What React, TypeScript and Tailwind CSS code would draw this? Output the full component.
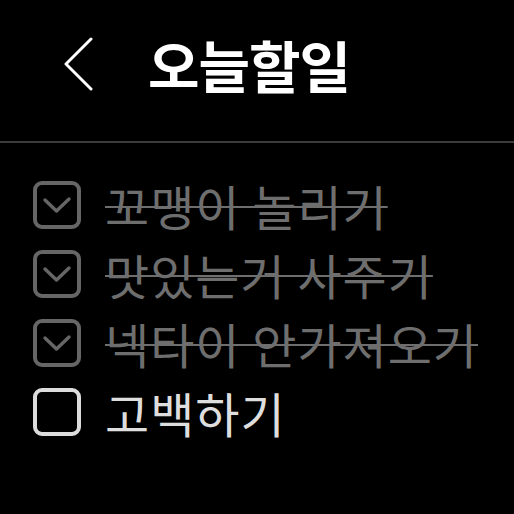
const todos = [
  { text: '꼬맹이 놀리기', done: true },
  { text: '맛있는거 사주기', done: true },
  { text: '넥타이 안가져오기', done: true },
  { text: '고백하기', done: false },
]

function CheckBox({ done }: { done: boolean }) {
  return (
    <div
      className={`w-[48px] h-[48px] rounded-[9px] border-[4px] flex items-center justify-center shrink-0 ${
        done ? 'border-[#666666]' : 'border-[#dcdcdc]'
      }`}
    >
      {done && (
        <svg width="40" height="40" viewBox="0 0 40 40" fill="none">
          <path d="M8 15l11.5 11L32 14" stroke="#666666" strokeWidth="3.4" strokeLinecap="round" strokeLinejoin="round" />
        </svg>
      )}
    </div>
  )
}

export default function App() {
  return (
    <div
      className="w-[514px] h-[514px] bg-black overflow-hidden"
      style={{ fontFamily: '"Noto Sans CJK KR", "Noto Sans", sans-serif' }}
    >
      {/* header */}
      <div className="h-[141px] flex items-center pl-[63px] pb-[14px]">
        <svg width="30" height="54" viewBox="0 0 30 54" fill="none">
          <path d="M28 2L3 27l25 25" stroke="white" strokeWidth="3" strokeLinecap="round" strokeLinejoin="round" />
        </svg>
        <h1 className="ml-[55px] text-white font-bold text-[56px] leading-none tracking-[-1px]">오늘할일</h1>
      </div>
      <div className="h-[2px] bg-[#3c3c3c]" />

      {/* list */}
      <div className="flex flex-col gap-[21px] pt-[38px] pl-[33px]">
        {todos.map((t, i) => (
          <div key={i} className="flex items-center h-[48px]">
            <CheckBox done={t.done} />
            <span
              className={`ml-[24px] text-[48px] leading-none tracking-[1px] ${
                t.done ? 'text-[#6e6e6e] line-through decoration-[2px] decoration-[#6e6e6e]' : 'text-[#dedede]'
              }`}
            >
              {t.text}
            </span>
          </div>
        ))}
      </div>
    </div>
  )
}
